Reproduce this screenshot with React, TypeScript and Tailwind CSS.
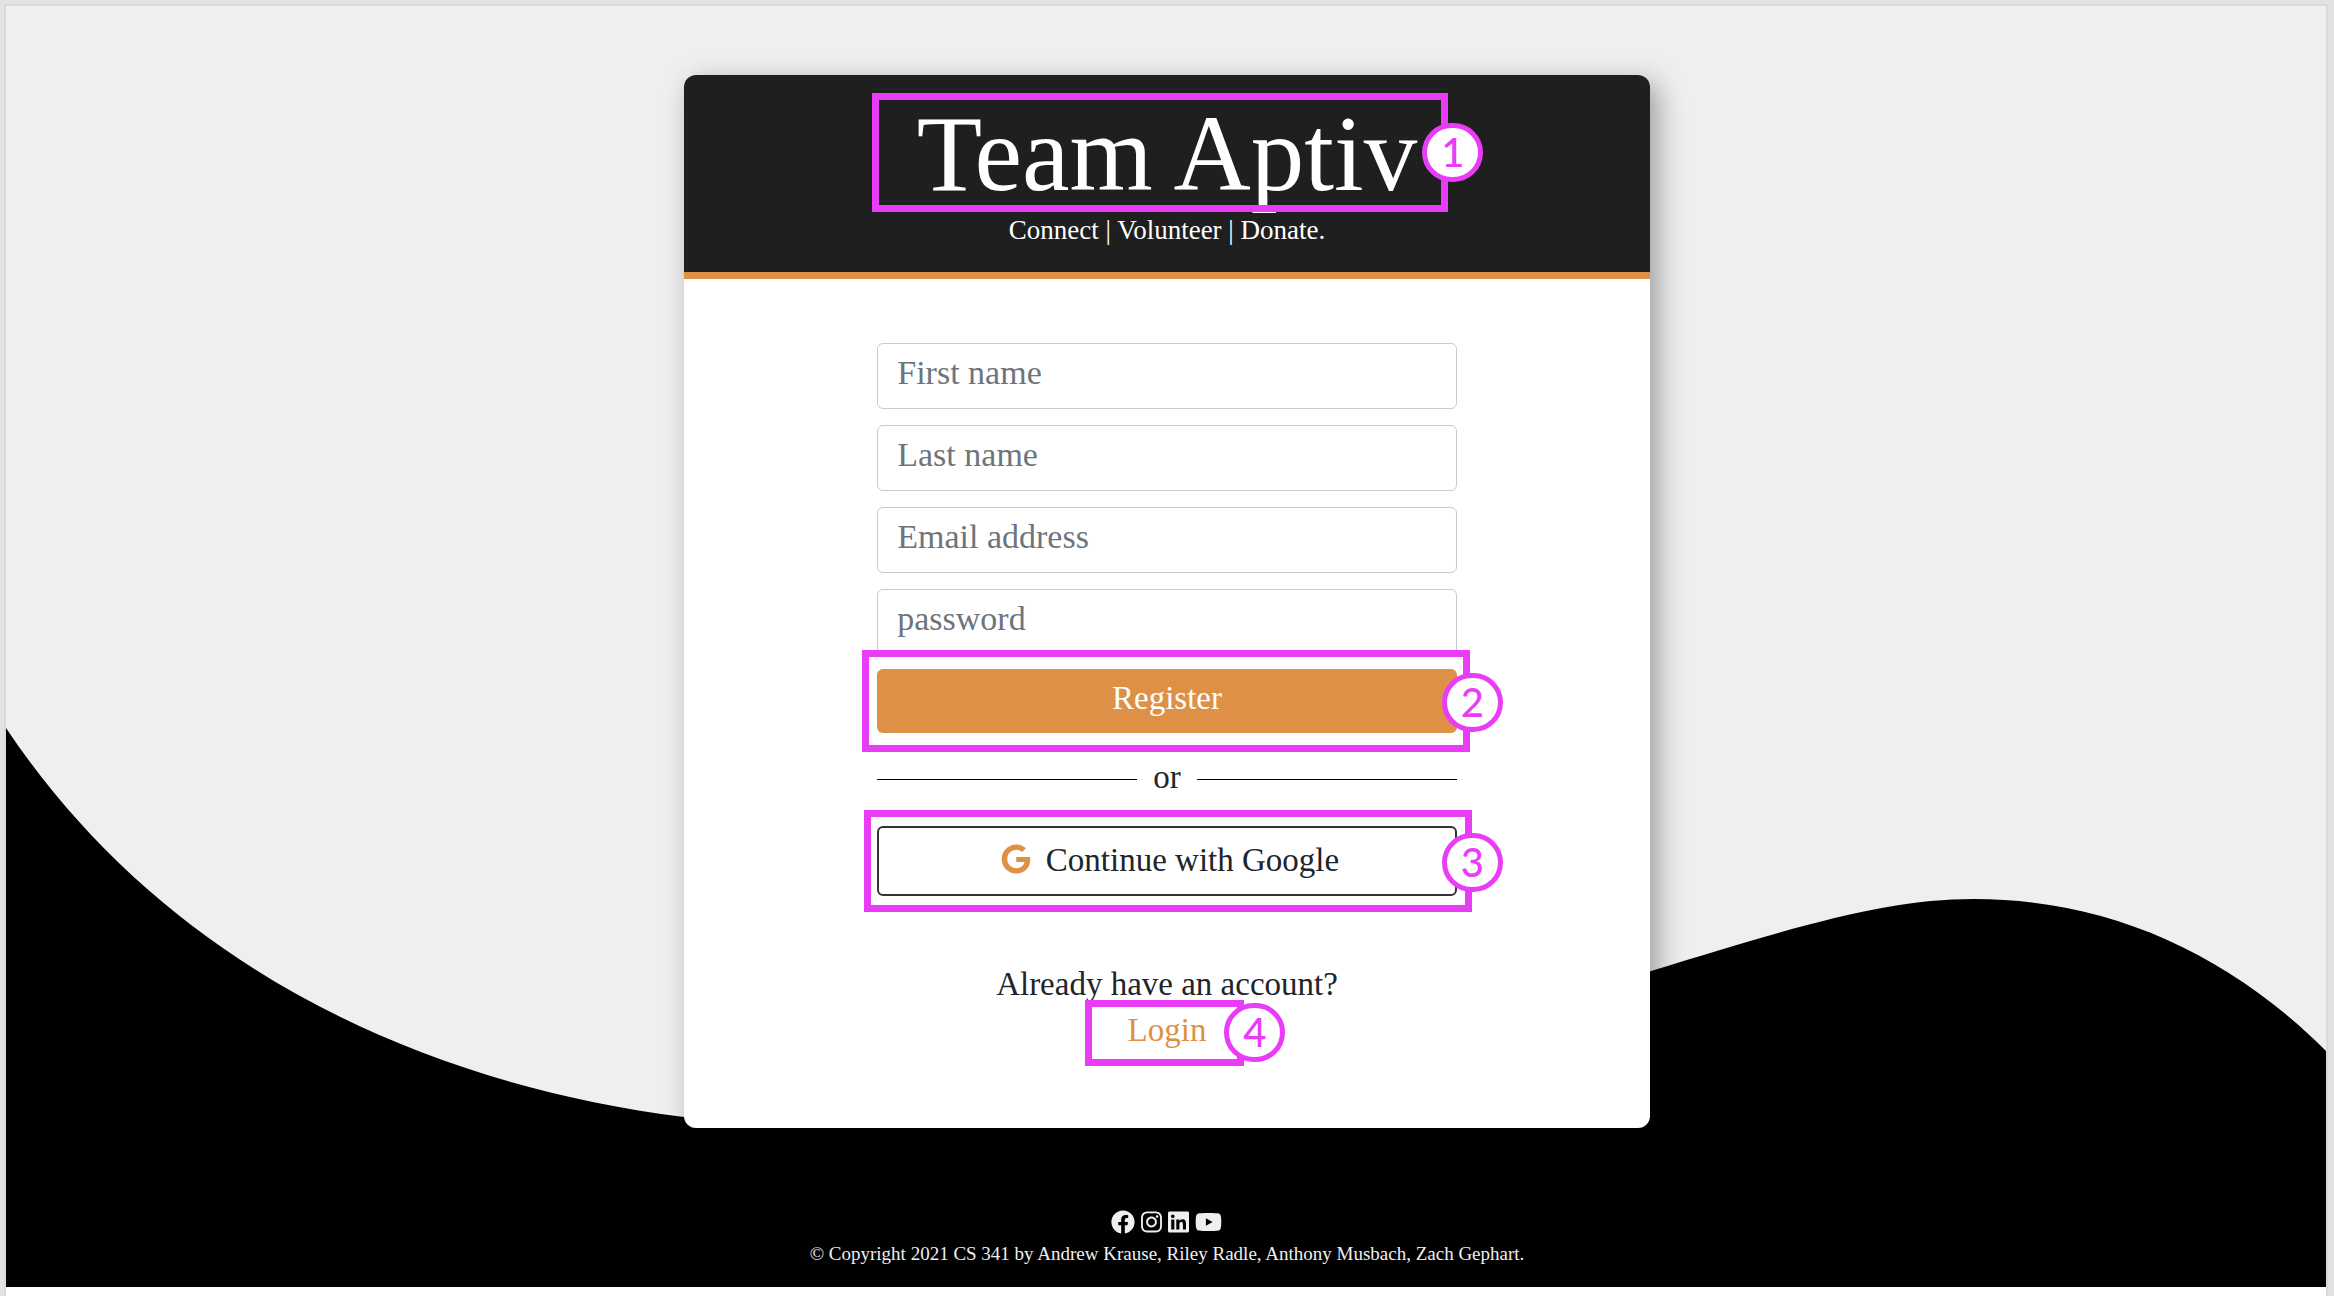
import React from "react";
import { FaFacebook, FaInstagram, FaLinkedin, FaYoutube, FaGoogle } from "react-icons/fa";

const fields = [
  { id: "first", label: "First name", type: "text" },
  { id: "last", label: "Last name", type: "text" },
  { id: "email", label: "Email address", type: "email" },
  { id: "password", label: "password", type: "password" },
];

const socials = [
  { name: "Facebook", Icon: FaFacebook, size: "w-6" },
  { name: "Instagram", Icon: FaInstagram, size: "w-[21px]" },
  { name: "LinkedIn", Icon: FaLinkedin, size: "w-[21px]" },
  { name: "YouTube", Icon: FaYoutube, size: "w-[27px]" },
];

function Marker({ n, frame, badge }: { n: number; frame: string; badge: string }) {
  return (
    <>
      <span className={`pointer-events-none absolute border-[7px] border-[#e83cf7] ${frame}`} />
      <span
        className={`pointer-events-none absolute flex h-[59px] w-[61px] items-center justify-center rounded-full border-[5px] border-[#e83cf7] bg-white pb-0.5 font-['Lato',sans-serif] text-[40px] leading-none font-medium text-[#e83cf7] ${badge}`}
      >
        {n}
      </span>
    </>
  );
}

function Wave() {
  return (
    <svg
      aria-hidden="true"
      className="absolute inset-0 h-full w-full"
      viewBox="6 6 2320 1281"
      preserveAspectRatio="none"
    >
      <path d="M6 728C149 942 386 1079 684 1117C1000 1140 1300 1080 1651 971C1806 923 1890 899 1974 899C2107 899 2227 952 2326 1051V1287H6Z" />
    </svg>
  );
}

export default function App() {
  return (
    <div className="flex min-h-screen flex-col bg-[#e2e2e2] pt-1 pr-1.5 pl-1 font-['Liberation_Serif',serif]">
      <div className="flex flex-1 flex-col border-x-2 border-t-2 border-[#d9d9d9] bg-white pb-[9px]">
        <div className="relative flex flex-1 flex-col items-center bg-[#efefef] pl-0.5">
          <Wave />
          <main className="relative mt-[69px] w-5/12 rounded-xl bg-white shadow-[8px_8px_28px_rgba(0,0,0,0.35)]">
            <header className="rounded-t-xl border-b-[7px] border-[#de9046] bg-[#1f1f1f] pt-6 pb-[21px] text-center text-white">
              <div className="relative mx-auto w-fit">
                <h1 className="text-[107px] leading-[110px] whitespace-nowrap">Team Aptiv</h1>
                <Marker n={1} frame="-top-1.5 -right-[31px] -bottom-[3px] -left-[45px]" badge="top-6 -right-[66px]" />
              </div>
              <p className="text-[27px] leading-[42px]">Connect | Volunteer | Donate.</p>
            </header>
            <form
              className="mx-auto flex w-3/5 flex-col pt-16 pb-[75px] text-[33px] text-[#212529]"
              onSubmit={(e) => e.preventDefault()}
            >
              <div className="flex flex-col gap-4">
                {fields.map((f) => (
                  <input
                    key={f.id}
                    id={f.id}
                    type={f.type}
                    aria-label={f.label}
                    placeholder={f.label}
                    className="h-[66px] w-full rounded-md border border-[#c6ccd3] bg-white px-[19px] pb-1.5 text-[34px] placeholder:text-[#6c757d]"
                  />
                ))}
              </div>
              <div className="relative mt-3.5">
                <button type="submit" className="h-16 w-full rounded-md bg-[#de9046] pb-1 text-white">
                  Register
                </button>
                <Marker n={2} frame="-top-[19px] -right-[13px] -bottom-[19px] -left-[15px]" badge="top-1 -right-[46px]" />
              </div>
              <div className="my-5 flex h-[53px] items-center gap-4">
                <span className="h-px flex-1 bg-black" />
                <span className="pb-1">or</span>
                <span className="h-px flex-1 bg-black" />
              </div>
              <div className="relative">
                <button
                  type="button"
                  className="flex h-[70px] w-full items-center justify-center gap-[15px] rounded-md border-2 border-[#333333] bg-white pb-px pl-1.5"
                >
                  <FaGoogle className="mb-1 h-[30px] w-[30px] text-[#de9046]" />
                  Continue with Google
                </button>
                <Marker n={3} frame="-top-4 -right-[15px] -bottom-4 -left-[13px]" badge="top-[7px] -right-[46px]" />
              </div>
              <p className="mt-[65px] text-center leading-[46px]">Already have an account?</p>
              <div className="relative mx-auto leading-[46px]">
                <a href="#login" className="text-[#de9046]">
                  Login
                </a>
                <Marker n={4} frame="-top-[7px] -right-[38px] -bottom-[13px] -left-[43px]" badge="-top-1 -right-[79px]" />
              </div>
            </form>
          </main>
          <footer className="relative mt-auto flex flex-col items-center pt-16 pb-[19px] text-[#efefef]">
            <nav className="flex gap-1.5">
              {socials.map(({ name, Icon, size }) => (
                <a key={name} href={`#${name.toLowerCase()}`} aria-label={name}>
                  <Icon className={`h-6 ${size}`} />
                </a>
              ))}
            </nav>
            <p className="mt-1.5 text-[19px] leading-7">
              © Copyright 2021 CS 341 by Andrew Krause, Riley Radle, Anthony Musbach, Zach Gephart.
            </p>
          </footer>
        </div>
      </div>
    </div>
  );
}
